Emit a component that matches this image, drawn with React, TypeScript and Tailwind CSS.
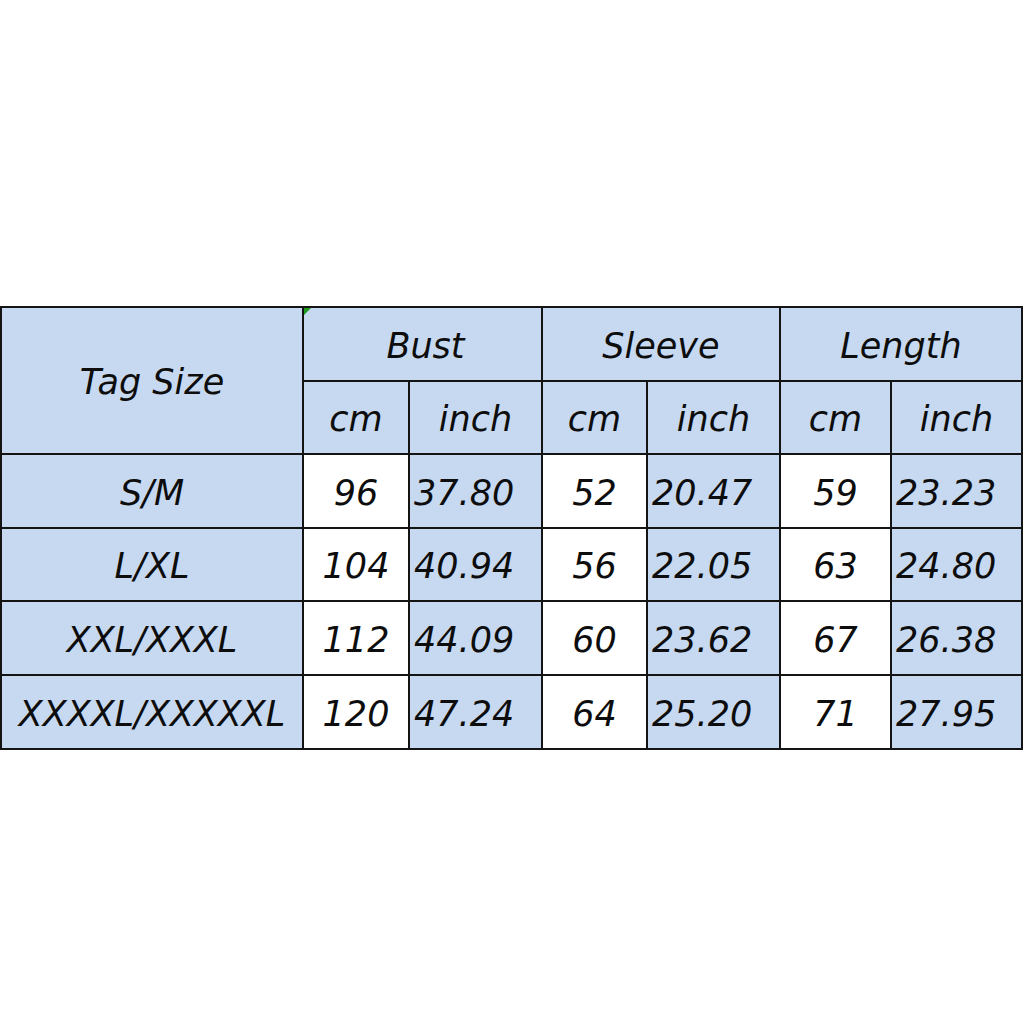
import React from "react";

const rows = [
  ["S/M", "96", "37.80", "52", "20.47", "59", "23.23"],
  ["L/XL", "104", "40.94", "56", "22.05", "63", "24.80"],
  ["XXL/XXXL", "112", "44.09", "60", "23.62", "67", "26.38"],
  ["XXXXL/XXXXXL", "120", "47.24", "64", "25.20", "71", "27.95"],
];

const blue = "bg-[#c6d9f1]";

export default function App() {
  return (
    <div className="w-[1024px] h-[1024px] bg-white pt-[306px] text-[#0d0d0d]" style={{ fontFamily: '"DejaVu Sans", Verdana, sans-serif' }}>
      <div className="grid w-[1023px] bg-[#141414] gap-[2px] p-[2px] grid-cols-[300px_104px_131px_103px_131px_109px_129px] grid-rows-[72px_71px_72px_71px_72px_72px] italic text-[35px] leading-none [&>div]:pt-[4px]">
        <div className={`${blue} row-span-2 flex items-center justify-center`}>Tag Size</div>
        <div className={`${blue} col-span-2 flex items-center justify-center relative pl-[6px]`}>
          <svg className="absolute left-0 top-0" width="7" height="7" viewBox="0 0 7 7">
            <polygon points="0,0 7,0 0,7" fill="#1e9a1e" />
          </svg>
          Bust
        </div>
        <div className={`${blue} col-span-2 flex items-center justify-center`}>Sleeve</div>
        <div className={`${blue} col-span-2 flex items-center justify-center`}>Length</div>
        <div className={`${blue} flex items-center justify-center`}>cm</div>
        <div className={`${blue} flex items-center justify-center`}>inch</div>
        <div className={`${blue} flex items-center justify-center`}>cm</div>
        <div className={`${blue} flex items-center justify-center`}>inch</div>
        <div className={`${blue} flex items-center justify-center`}>cm</div>
        <div className={`${blue} flex items-center justify-center`}>inch</div>
        {rows.map((r) => (
          <React.Fragment key={r[0]}>
            <div className={`${blue} flex items-center justify-center`}>{r[0]}</div>
            <div className="bg-white flex items-center justify-center">{r[1]}</div>
            <div className={`${blue} flex items-center pl-[4px]`}>{r[2]}</div>
            <div className="bg-white flex items-center justify-center">{r[3]}</div>
            <div className={`${blue} flex items-center pl-[4px]`}>{r[4]}</div>
            <div className="bg-white flex items-center justify-center">{r[5]}</div>
            <div className={`${blue} flex items-center pl-[4px]`}>{r[6]}</div>
          </React.Fragment>
        ))}
      </div>
    </div>
  );
}
